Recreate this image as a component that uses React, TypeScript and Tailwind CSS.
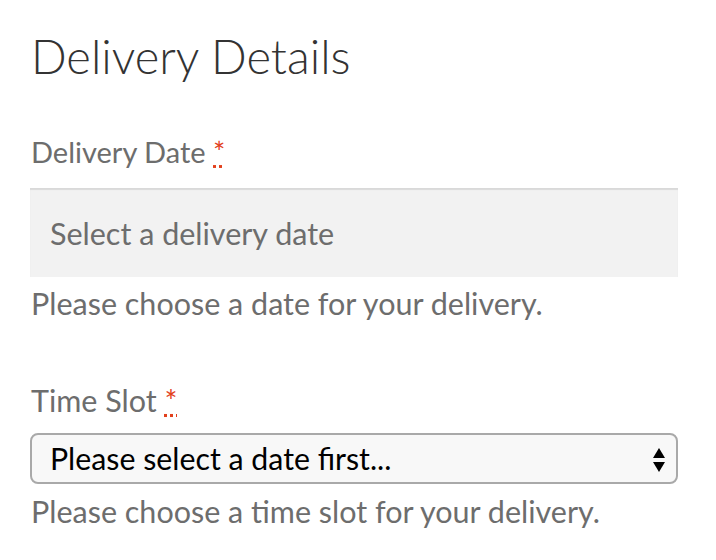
import React from 'react';

const font = { fontFamily: 'Lato, "Open Sans", sans-serif' };

const Required: React.FC = () => (
    <>
        {' '}
        <abbr title="required" className="text-[#e2401c] underline decoration-dotted decoration-[#e2401c]">
            *
        </abbr>
    </>
);

export default function App() {
    return (
        <div className="w-[716px] h-[560px] bg-white pl-[31px] pr-[38px] pt-[26px]" style={font}>
            <h2 className="text-[47px] font-light leading-[60px] text-[#333333]">Delivery Details</h2>

            <div className="mt-[46px]">
                <label className="block text-[29px] leading-[40px] text-[#6d6d6d]">
                    Delivery Date<Required />
                </label>
                <input
                    type="text"
                    placeholder="Select a delivery date"
                    readOnly
                    className="mt-[16px] block w-[648px] h-[89px] -ml-px bg-[#f2f2f2] px-[20px] text-[30.5px] text-[#6d6d6d] placeholder:text-[#6d6d6d] shadow-[inset_0_2px_1px_rgba(0,0,0,0.1)] outline-none"
                />
                <p className="mt-[6px] text-[30.5px] leading-[40px] text-[#6d6d6d]">
                    Please choose a date for your delivery.
                </p>
            </div>

            <div className="mt-[57px]">
                <label className="block text-[30.5px] leading-[40px] text-[#6d6d6d]">
                    Time Slot<Required />
                </label>
                <div className="relative mt-[13px] -ml-px w-[648px] h-[51px] rounded-[8px] border-2 border-[#a9a9a9] bg-[#f8f8f8] flex items-center pl-[18px]">
                    <span className="text-[30.3px] text-black">Please select a date first...</span>
                    <svg className="absolute right-[10px] top-[12px]" width="14" height="26" viewBox="0 0 14 26">
                        <path d="M7 1 L13 11 H1 Z" fill="#000" />
                        <path d="M7 25 L13 15 H1 Z" fill="#000" />
                    </svg>
                </div>
                <p className="mt-[7px] text-[30.5px] leading-[40px] text-[#6d6d6d]">
                    Please choose a time slot for your delivery.
                </p>
            </div>
        </div>
    );
}
